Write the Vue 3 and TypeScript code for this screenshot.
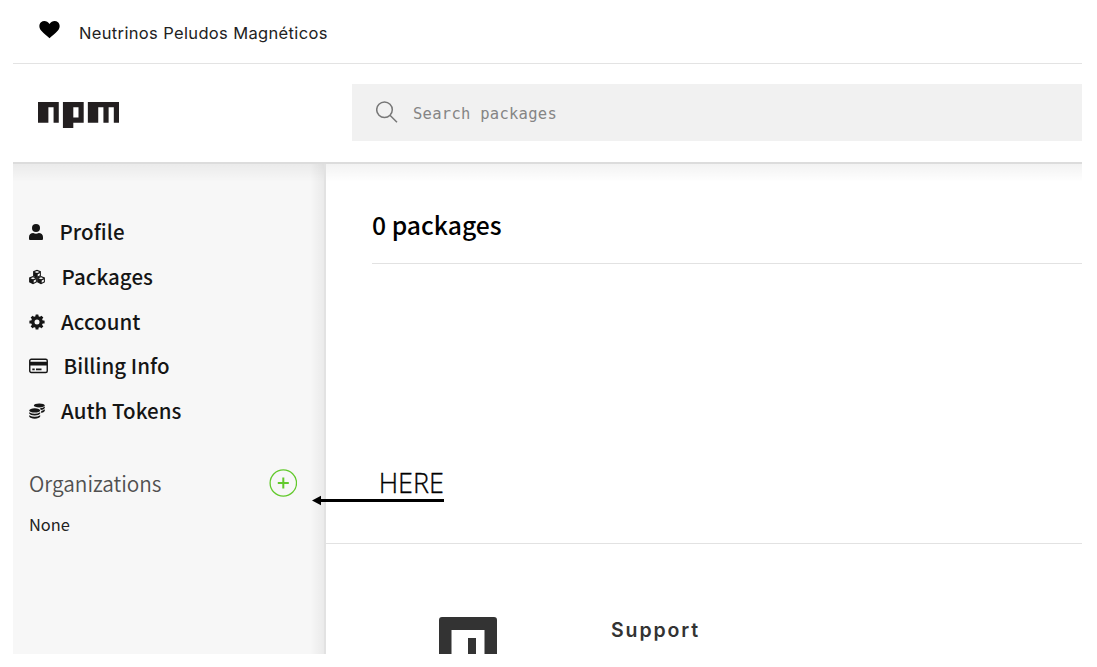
<script setup lang="ts">
interface NavItem {
  label: string
  icon: string
  width: number
  gap: number
  spacing: number
}

const items: NavItem[] = [
  { label: 'Profile', icon: 'user', width: 14, gap: 16.500, spacing: 0.05 },
  { label: 'Packages', icon: 'cubes', width: 16, gap: 16.500, spacing: 0.05 },
  { label: 'Account', icon: 'gear', width: 16, gap: 16, spacing: 0.05 },
  { label: 'Billing Info', icon: 'card', width: 19, gap: 15.500, spacing: 0.05 },
  { label: 'Auth Tokens', icon: 'coins', width: 16, gap: 16, spacing: 0.05 },
]
const teeth: number[] = [0, 45, 90, 135, 180, 225, 270, 315]
</script>

<template>
  <div class="page">
    <div class="topbar">
      <svg class="heart" width="21" height="18" viewBox="0 0 21 18">
        <path d="M10.5 17.3C8.2 14.8 4.8 12.8 2.1 9.5C-.3 6.6-.1 3 2 1.2C4.600-.9 8.600-.1 10.500 3C12.400-.1 16.400-.9 19 1.200C21.100 3 21.300 6.600 18.900 9.500C16.200 12.800 12.800 14.800 10.500 17.300Z" />
      </svg>
      <span class="tagline">Neutrinos Peludos Magnéticos</span>
    </div>

    <header class="header">
      <svg class="logo" width="81" height="26" viewBox="0 0 780 250" preserveAspectRatio="none">
        <path fill="#231f20" d="M240,250h100v-50h100V0H240V250z M340,50h50v100h-50V50z M480,0v200h100V50h50v150h50V50h50v150h50V0H480z M0,0v200h100V50h50v150h50V0H0z" />
      </svg>
      <div class="search">
        <svg width="22" height="22" viewBox="0 0 22 22" fill="none" stroke="#777" stroke-width="1.5">
          <circle cx="8.500" cy="8.700" r="7.800" />
          <path d="M14 14.200L21 21.200" />
        </svg>
        <span class="placeholder">Search packages</span>
      </div>
    </header>

    <div class="body">
      <aside class="sidebar">
        <nav class="nav">
          <a v-for="item in items" :key="item.icon" class="nav-item" :style="{ gap: item.gap + 'px' }">
            <svg v-if="item.icon === 'user'" :width="item.width" height="16" viewBox="0 0 14 16">
              <circle cx="7" cy="4" r="4" />
              <path d="M0 15V13C0 10.500 2 9 4.200 9C6 9.900 8 9.900 9.800 9C12 9 14 10.500 14 13V15Q14 16 13 16H1Q0 16 0 15Z" />
            </svg>
            <svg v-else-if="item.icon === 'cubes'" :width="item.width" height="16" viewBox="0 0 16 16">
              <g id="cube">
                <path d="M8 .8L11.900 2.300V7L8 8.900L4.100 7V2.300Z" />
                <path d="M5.500 2.900L8 2L10.500 2.900L8 3.900ZM8.700 5.200L10.900 4.200V6.300L8.700 7.400Z" fill="#f7f7f7" />
              </g>
              <use href="#cube" x="-4" y="6.300" />
              <use href="#cube" x="4" y="6.300" />
            </svg>
            <svg v-else-if="item.icon === 'gear'" :width="item.width" height="16" viewBox="0 0 16 16">
              <rect v-for="angle in teeth" :key="angle" x="6.500" y=".4" width="3" height="4" rx=".5" :transform="`rotate(${angle} 8 8)`" />
              <circle cx="8" cy="8" r="4.200" fill="none" stroke="#151515" stroke-width="3.400" />
            </svg>
            <svg v-else-if="item.icon === 'card'" :width="item.width" height="16" viewBox="0 0 19 16">
              <rect x=".75" y="1.250" width="17.500" height="13.200" rx="1.500" fill="none" stroke="#151515" stroke-width="1.400" />
              <path d="M1 3.700H18V7.600H1ZM3.300 10.500H5.700V12.300H3.300ZM7 10.500H12.500V12.300H7Z" />
            </svg>
            <svg v-else :width="item.width" height="16" viewBox="0 0 16 16">
              <ellipse cx="10.300" cy="2.400" rx="5.500" ry="2" />
              <path d="M11 5.200Q14.200 5 15.800 3.500V5Q14.800 6.800 11.800 7ZM12.200 8Q14.700 7.500 15.800 6.300V8Q15 9.700 12.200 10Z" />
              <ellipse cx="5.700" cy="7.400" rx="5.500" ry="2.100" />
              <path d="M.2 9.200Q5.700 12.400 11.200 9.200V10.600Q10 12.500 5.700 12.500T.2 10.600ZM.2 12.200Q5.700 15.400 11.200 12.200V13.600Q10 15.700 5.700 15.700T.2 13.600Z" />
            </svg>
            <span class="nav-label" :style="{ letterSpacing: item.spacing + 'px' }">{{ item.label }}</span>
          </a>
        </nav>
        <div class="orgs">
          <span class="orgs-title">Organizations</span>
          <svg width="28" height="28" viewBox="0 0 28 28" fill="none" stroke="#62c92c">
            <circle cx="14.300" cy="14" r="13.200" stroke-width="1.300" />
            <path d="M14.300 8.500V19.500M8.800 14H19.800" stroke-width="2" />
          </svg>
        </div>
        <div class="none">None</div>
      </aside>

      <main class="main">
        <section class="packages">
          <h1>0 packages</h1>
        </section>
        <footer class="footer">
          <svg class="mark" width="58" height="37" viewBox="0 0 58 37">
            <path fill="#333" d="M0 37V3Q0 0 3 0H55Q58 0 58 3V37H45.500V13H12.500V37ZM29 21H37V37H29Z" />
          </svg>
          <span class="support">Support</span>
        </footer>
      </main>
    </div>

    <div class="note">
      <span class="note-text">HERE</span>
      <svg width="132" height="11" viewBox="0 0 132 11">
        <path d="M0 5.500L9 .8V4H132V7H9V10.200Z" />
      </svg>
    </div>
  </div>
</template>

<style>
body {
  background: #fff;
}
</style>

<style scoped>
.page {
  position: relative;
  box-sizing: border-box;
  width: 1097px;
  height: 667px;
  padding: 0 15px 13px 13px;
  overflow: hidden;
  display: flex;
  flex-direction: column;
  background: #fff;
  font-family: "Noto Sans CJK JP", "Noto Sans", sans-serif;
}
svg {
  display: block;
  flex: none;
}
.topbar {
  box-sizing: border-box;
  flex: none;
  height: 64px;
  padding-left: 26px;
  display: flex;
  align-items: center;
  gap: 19px;
  border-bottom: 1px solid #e3e3e3;
}
.heart {
  margin-bottom: 3px;
}
.tagline {
  padding-top: 2px;
  font: 16.500px/20px Inter, sans-serif;
  letter-spacing: 0.350px;
  color: #222;
  white-space: nowrap;
}
.header {
  box-sizing: border-box;
  flex: none;
  height: 100px;
  padding: 20px 0 0 25px;
  display: flex;
  align-items: flex-start;
  border-bottom: 2px solid #dcdcdc;
}
.logo {
  margin: 18px 233px 0 0;
}
.search {
  box-sizing: border-box;
  flex: 1;
  height: 57px;
  padding-left: 24px;
  display: flex;
  align-items: center;
  gap: 15px;
  background: #f1f1f1;
}
.search svg {
  margin-bottom: 1px;
}
.placeholder {
  padding-top: 3px;
  font: 15.500px/20px "DejaVu Sans Mono", monospace;
  letter-spacing: 0.270px;
  color: #858585;
  white-space: nowrap;
}
.body {
  flex: 1;
  min-height: 0;
  display: flex;
}
.sidebar {
  box-sizing: border-box;
  width: 313px;
  padding: 46px 27px 0 16px;
  border-right: 2px solid #e2e2e2;
  background: linear-gradient(#0000000d, #0000 18px), linear-gradient(to left, #0000000d, #0000 14px), #f7f7f7;
}
.nav-item {
  height: 44.700px;
  display: flex;
  align-items: center;
  color: #151515;
  fill: #151515;
  font-size: 20.500px;
  line-height: 30px;
  font-weight: 500;
  white-space: nowrap;
}
.nav-label {
  padding-bottom: 2px;
}
.orgs {
  height: 28px;
  margin-top: 35.500px;
  display: flex;
  align-items: center;
  justify-content: space-between;
}
.orgs-title {
  font-size: 20.800px;
  line-height: 28px;
  font-weight: 350;
  color: #505050;
}
.none {
  margin-top: 15px;
  font-size: 16.400px;
  line-height: 24px;
  color: #222;
}
.main {
  flex: 1;
  display: flex;
  flex-direction: column;
  background: linear-gradient(#0000000d, #0000 18px);
}
.packages {
  box-sizing: border-box;
  height: 380px;
  padding: 43px 0 0 46px;
  border-bottom: 1px solid #e2e2e2;
}
h1 {
  box-sizing: border-box;
  height: 57px;
  margin: 0;
  border-bottom: 1px solid #e2e2e2;
  font-size: 24.700px;
  line-height: 34px;
  font-weight: 500;
}
.footer {
  flex: 1;
  padding: 73px 0 0 113px;
  display: flex;
  align-items: flex-start;
  gap: 114px;
}
.support {
  padding-top: 1px;
  font: 600 19.500px/24px Inter, sans-serif;
  letter-spacing: 1.900px;
  color: #333;
}
.note {
  position: absolute;
  left: 312px;
  top: 466px;
  width: 132px;
  text-align: right;
}
.note-text {
  display: block;
  height: 29px;
  font: 300 27px/34px "Open Sans", sans-serif;
  -webkit-text-stroke: 0.300px #000;
}
</style>
